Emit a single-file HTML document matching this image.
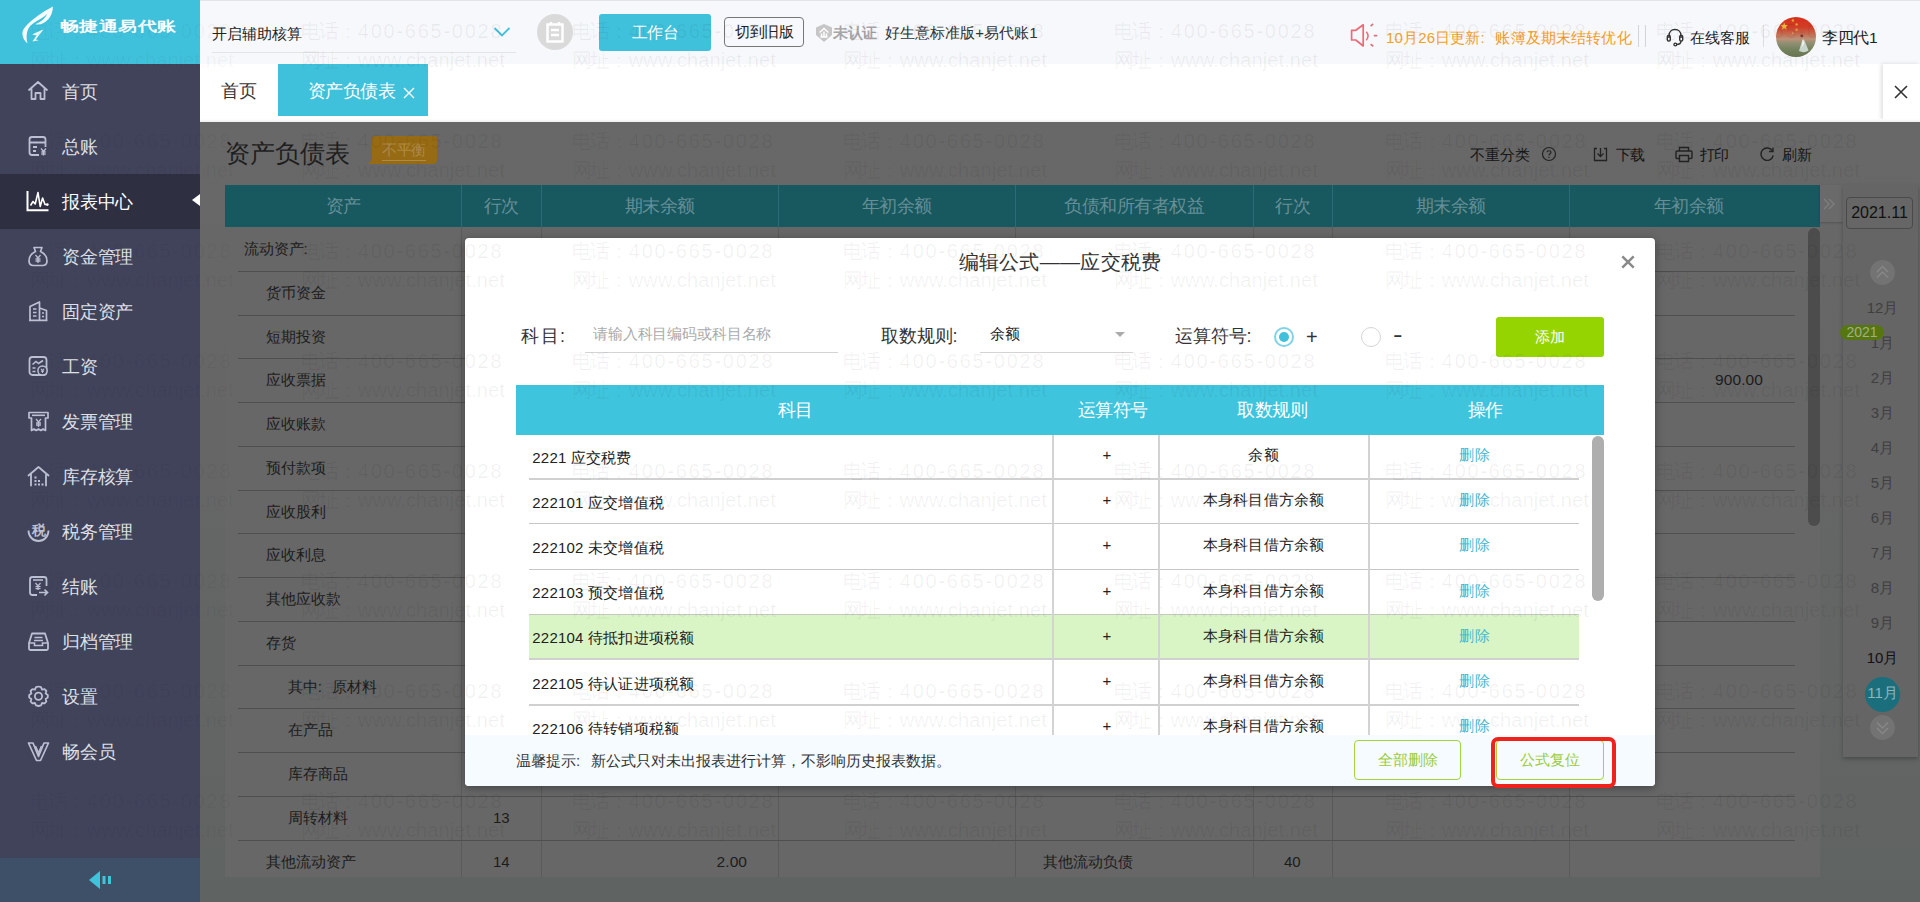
<!DOCTYPE html>
<html><head><meta charset="utf-8"><title>资产负债表</title>
<style>
*{box-sizing:border-box;margin:0;padding:0}
html,body{width:1920px;height:902px;overflow:hidden;background:#fff}
body{font-family:"Liberation Sans", sans-serif;position:relative;color:#333}
.abs{position:absolute}
.t{position:absolute;white-space:nowrap;line-height:1}
#side{position:absolute;left:0;top:0;width:200px;height:902px;background:#41435b}
#logo{position:absolute;left:0;top:0;width:200px;height:64px;background:#40c1db}
.mi{position:absolute;left:0;width:200px;height:55px}
.mi.act{background:#2e3042}
.mi span{position:absolute;left:62px;top:17px;font-size:18px;line-height:22px;color:#dfe0e6;white-space:nowrap;letter-spacing:-0.2px}
.mi.act span{color:#fff}
.mi svg{position:absolute;left:26px;top:15px}
#sbot{position:absolute;left:0;top:858px;width:200px;height:44px;background:#3e5068}
#top{position:absolute;left:200px;top:0;width:1720px;height:64px;background:#f7f8fb;border-top:1px solid #e3e4ea}
#tabs{position:absolute;left:200px;top:64px;width:1720px;height:58px;background:#fff}
#content{position:absolute;left:200px;top:122px;width:1720px;height:780px;background:linear-gradient(#686868 0%,#666666 35%,#626564 75%,#5f6362 100%)}
.hd{position:absolute;top:185px;height:42px;background:#18585f;color:#668f97;font-size:18px;line-height:42px;text-align:center;letter-spacing:-0.5px}
.rl{position:absolute;height:1px;background:#4f4f4f}
.vl{position:absolute;width:1px;background:#5a5a5a}
.rt{position:absolute;font-size:15px;line-height:16px;color:#1c1c1c;white-space:nowrap;letter-spacing:-0.1px}
#modal{position:absolute;left:465px;top:238px;width:1190px;height:548px;background:#fff;border-radius:4px;overflow:hidden;box-shadow:0 2px 8px rgba(0,0,0,.35)}
.mh{position:absolute;top:147px;height:50px;line-height:51px;color:#fff;font-size:18px;text-align:center;letter-spacing:-0.5px}
.mr{position:absolute;left:64px;width:1050px;height:45px;border-bottom:2px solid #d0d0d0}
.mr.thin{border-bottom:1px solid #c6c6c6;height:44.6px}
.mr.sel{background:#d9f5c6}
.mr span{position:absolute;top:11.4px;font-size:15px;line-height:18px;color:#222;white-space:nowrap}
.mr .c1{left:3.3px;top:14.1px;letter-spacing:0.2px}
.mr .c2{left:525px;width:106px;text-align:center}
.mr .c3{left:629.5px;width:210px;text-align:center;letter-spacing:0.25px}
.mr .c4{left:841.5px;width:209px;text-align:center;color:#41b7d3;letter-spacing:0.8px}
.mv{position:absolute;top:197px;width:2px;height:301px;background:#d3d3d3}
.btn{position:absolute;height:40px;border:1px solid #a3d43c;border-radius:4px;background:transparent;color:#9bcb3c;font-size:15px;line-height:38px;text-align:center;letter-spacing:0}
.wm{position:absolute;font-size:20px;line-height:29px;color:rgba(0,0,0,0.06);white-space:nowrap;letter-spacing:1.75px;pointer-events:none}
.wm i{font-style:normal;letter-spacing:0.1px}
.wm b{font-weight:normal;letter-spacing:-1.6px;margin-right:1.6px}
.wm.s{color:rgba(0,0,0,0.04)}
.mon{position:absolute;left:1845px;width:75px;text-align:center;font-size:15px;line-height:18px;color:#3f3f3f}
</style></head><body>

<div id="side">
<div id="logo">
<svg class="abs" style="left:0;top:0" width="60" height="50" viewBox="0 0 60 50"><path d="M52.9 6.4 C46 10 38 15 33 19.5 C26 25 22 30 22.4 34 C22.6 37.5 24.5 41 27.6 43.5 C26.5 40 26.2 36 27.2 32 C28.2 27.5 31 24.2 36 21.5 C40 19.3 44 17 47.5 13.5 C45 18.5 41 22 35.5 24.3 C40 25.3 45 23.3 48.5 19 C51.5 15.3 52.8 11 52.9 6.4 Z" fill="#fff" opacity=".95"/><path d="M43.6 29.3 L32 34.6 L36.6 35.5 L32.4 41.6 L38.8 40.2 L35.8 39.6 Z" fill="#fff" opacity=".9"/></svg>
<div class="t" style="left:59.5px;top:17px;font-size:19px;font-weight:bold;color:#fff;letter-spacing:0.6px;transform:scaleY(0.74);transform-origin:50% 50%">畅捷通易代账</div>
</div>
<div class="mi" style="top:64px"><svg width="25" height="25" viewBox="0 0 25 25"><path d="M3 11 L12 3 L21 11 M5.5 9.5 V20 H9.5 V14 H14.5 V20 H18.5 V9.5" fill="none" stroke="#bcc0d3" stroke-width="1.8" stroke-linejoin="round" stroke-linecap="round"/></svg><span>首页</span></div>
<div class="mi" style="top:119px"><svg width="25" height="25" viewBox="0 0 25 25"><rect x="3.5" y="3" width="16" height="18" rx="2.5" fill="none" stroke="#bcc0d3" stroke-width="1.8"/><path d="M3.5 8.5 H19.5 M7 13 H11 M7 17 H10" stroke="#bcc0d3" stroke-width="1.8"/><rect x="13" y="13" width="9" height="9" fill="#41435b"/><path d="M15 14.5 L17.5 17.5 L20 14.5 M17.5 17.5 V21.5 M15.3 18 H19.7 M15.3 20 H19.7" stroke="#bcc0d3" stroke-width="1.3" fill="none"/></svg><span>总账</span></div>
<div class="mi act" style="top:174px"><svg width="25" height="25" viewBox="0 0 25 25"><path d="M1.5 2 V21.3 H22.5" fill="none" stroke="#fff" stroke-width="2"/><path d="M4.5 16.5 L7 12.5 L9.2 15 L12 3.5 L14.2 17.5 L16.6 9 L19 15.5 H20.5" fill="none" stroke="#fff" stroke-width="1.6" stroke-linejoin="round"/><circle cx="21.3" cy="15.6" r="1.4" fill="#fff"/></svg><span>报表中心</span></div>
<div class="mi" style="top:229px"><svg width="25" height="25" viewBox="0 0 25 25"><path d="M8 3.5 H16 L14.5 7.5 C19 9.5 21 13.5 21 17 C21 20 19 21.5 16.5 21.5 H7.5 C5 21.5 3 20 3 17 C3 13.5 5 9.5 9.5 7.5 Z" fill="none" stroke="#bcc0d3" stroke-width="1.7" stroke-linejoin="round"/><path d="M9.5 11 L12 14 L14.5 11 M12 14 V19 M9.5 15 H14.5 M9.5 17 H14.5" stroke="#bcc0d3" stroke-width="1.3" fill="none"/></svg><span>资金管理</span></div>
<div class="mi" style="top:284px"><svg width="25" height="25" viewBox="0 0 25 25"><path d="M4 21 V7.5 L13.5 3 V21 M13.5 9 L20.5 11.5 V21 M3 21.3 H21.5" fill="none" stroke="#bcc0d3" stroke-width="1.7" stroke-linejoin="round"/><path d="M7 10 H10.5 M7 13.5 H10.5 M7 17 H10.5 M16 14 H18 M16 17.5 H18" stroke="#bcc0d3" stroke-width="1.5"/></svg><span>固定资产</span></div>
<div class="mi" style="top:339px"><svg width="25" height="25" viewBox="0 0 25 25"><rect x="3.5" y="3" width="17" height="18" rx="3" fill="none" stroke="#bcc0d3" stroke-width="1.8"/><path d="M6.5 10.5 L10 7.5 L12.5 9.5 L17 6.5 M6.5 14 H9.5 M6.5 17.5 H9.5" stroke="#bcc0d3" stroke-width="1.6" fill="none"/><circle cx="16.5" cy="16.5" r="4.6" fill="#41435b" stroke="#bcc0d3" stroke-width="1.5"/><path d="M15 14.8 L16.5 16.6 L18 14.8 M16.5 16.6 V19 M15 17.3 H18" stroke="#bcc0d3" stroke-width="1.1" fill="none"/></svg><span>工资</span></div>
<div class="mi" style="top:394px"><svg width="25" height="25" viewBox="0 0 25 25"><path d="M3 3.5 H22 V9 H19.5 V21.5 L17 20 L14.8 21.5 L12.5 20 L10.2 21.5 L8 20 L5.5 21.5 V9 H3 Z" fill="none" stroke="#bcc0d3" stroke-width="1.7" stroke-linejoin="round"/><path d="M6 6.3 H19" stroke="#bcc0d3" stroke-width="1.6"/><path d="M10 10 L12.5 13 L15 10 M12.5 13 V18 M10 14 H15 M10 16 H15" stroke="#bcc0d3" stroke-width="1.3" fill="none"/></svg><span>发票管理</span></div>
<div class="mi" style="top:449px"><svg width="25" height="25" viewBox="0 0 25 25"><path d="M2.5 11.5 L12.5 3 L22.5 11.5 M5 10 V21.5 M20 10 V21.5" fill="none" stroke="#bcc0d3" stroke-width="1.8" stroke-linejoin="round" stroke-linecap="round"/><path d="M8.5 20.5 H10.5 M12 20.5 H14 M15.5 20.5 H17.5 M8.5 17 H10.5 M12 17 H14 M8.5 13.5 H10.5" stroke="#bcc0d3" stroke-width="2"/></svg><span>库存核算</span></div>
<div class="mi" style="top:504px"><svg width="25" height="25" viewBox="0 0 25 25"><path d="M2.5 11.5 C2.5 17.5 7 22 12.5 22 C18 22 22.5 17.5 22.5 11.5" fill="none" stroke="#bcc0d3" stroke-width="1.8"/><text x="12.5" y="15.5" font-size="13.5" font-weight="bold" text-anchor="middle" fill="#bcc0d3" font-family="Liberation Sans, sans-serif">税</text></svg><span>税务管理</span></div>
<div class="mi" style="top:559px"><svg width="25" height="25" viewBox="0 0 25 25"><path d="M20.5 12 V5.5 C20.5 4 19.5 3 18 3 H6.5 C5 3 4 4 4 5.5 V18.5 C4 20 5 21 6.5 21 H11" fill="none" stroke="#bcc0d3" stroke-width="1.8"/><path d="M7 6 H17" stroke="#bcc0d3" stroke-width="1.6"/><path d="M9.5 9 L12 12 L14.5 9 M12 12 V16 M9.5 12.7 H14.5 M9.5 14.7 H14.5" stroke="#bcc0d3" stroke-width="1.2" fill="none"/><path d="M13 18.5 H21.5 M18.5 15.5 L21.5 18.5 L18.5 21.5" stroke="#bcc0d3" stroke-width="1.7" fill="none"/></svg><span>结账</span></div>
<div class="mi" style="top:614px"><svg width="25" height="25" viewBox="0 0 25 25"><path d="M3 14 L6 4.5 H19 L22 14 V19.5 C22 20.5 21.3 21 20.5 21 H4.5 C3.7 21 3 20.5 3 19.5 Z" fill="none" stroke="#bcc0d3" stroke-width="1.8" stroke-linejoin="round"/><path d="M3 14 H8.5 V16.5 H16.5 V14 H22 M8.5 8.5 H16.5 M8 11.5 H17" fill="none" stroke="#bcc0d3" stroke-width="1.6"/></svg><span>归档管理</span></div>
<div class="mi" style="top:669px"><svg width="25" height="25" viewBox="0 0 25 25"><path d="M12.5 2.5 L15 3.2 L16 5.6 L18.6 5.2 L20.4 7 L19.6 9.5 L21.8 11 V13.6 L19.6 15 L20.4 17.5 L18.6 19.4 L16 19 L15 21.4 L12.5 22 L10 21.4 L9 19 L6.4 19.4 L4.6 17.5 L5.4 15 L3.2 13.6 V11 L5.4 9.5 L4.6 7 L6.4 5.2 L9 5.6 L10 3.2 Z" fill="none" stroke="#bcc0d3" stroke-width="1.8" stroke-linejoin="round"/><circle cx="12.5" cy="12.3" r="3.6" fill="none" stroke="#bcc0d3" stroke-width="1.8"/></svg><span>设置</span></div>
<div class="mi" style="top:724px"><svg width="25" height="25" viewBox="0 0 25 25"><path d="M2.5 4 H7 L12.5 17.5 L18 4 H22.5 L14.5 21.5 H10.5 Z" fill="none" stroke="#bcc0d3" stroke-width="1.7" stroke-linejoin="round"/><path d="M9.5 7 L12.5 14 L15.5 7" fill="none" stroke="#bcc0d3" stroke-width="1.5"/></svg><span>畅会员</span></div>
<div class="abs" style="left:192px;top:194px;width:0;height:0;border-top:6px solid transparent;border-bottom:6px solid transparent;border-right:8px solid #fff"></div>
<div id="sbot"><svg class="abs" style="left:88px;top:13px" width="26" height="18" viewBox="0 0 26 18"><path d="M12 0 V18 L1 9 Z" fill="#3fc4de"/><rect x="14.5" y="5" width="3" height="8" fill="#3fc4de"/><rect x="20" y="5" width="3" height="8" fill="#3fc4de"/></svg></div>
</div>
<div id="top">
<div class="t" style="left:12px;top:25px;font-size:15px;color:#222;letter-spacing:0">开启辅助核算</div>
<div class="abs" style="left:12px;top:51px;width:304px;height:1px;background:#e4e4e4"></div>
<svg class="abs" style="left:293px;top:25px" width="18" height="12" viewBox="0 0 18 12"><path d="M1.5 2 L9 9.5 L16.5 2" fill="none" stroke="#3fc1db" stroke-width="1.8"/></svg>
<div class="abs" style="left:337px;top:13px;width:36px;height:36px;border-radius:18px;background:#dadada"></div>
<svg class="abs" style="left:345px;top:19px" width="20" height="24" viewBox="0 0 20 24"><path d="M2.5 4.5 H17.5 V21.5 H2.5 Z M6 2 V5 M14 2 V5 M6 10 H14 M6 15 H14" fill="none" stroke="#fff" stroke-width="2.4"/></svg>
<div class="abs" style="left:399px;top:13px;width:112px;height:37px;background:#3fc1db;border-radius:3px;color:#fff;font-size:16px;line-height:37px;text-align:center;letter-spacing:-0.5px">工作台</div>
<div class="abs" style="left:524px;top:16px;width:80px;height:30px;border:1px solid #777;border-radius:4px;color:#222;font-size:15px;line-height:28px;text-align:center;letter-spacing:-0.5px">切到旧版</div>
<svg class="abs" style="left:615px;top:22px" width="18" height="20" viewBox="0 0 18 20"><path d="M9 1 L17 4.5 V12 L9 19 L1 12 V4.5 Z" fill="#c6c6c6"/><path d="M4.5 9.5 L9 5.5 L13.5 9.5 M9 8.5 V14 M5.5 14 H12.5 M6.5 10.5 V14 M11.5 10.5 V14" stroke="#fff" stroke-width="1.5" fill="none"/></svg>
<div class="t" style="left:633px;top:24px;font-size:15px;color:#a6a6a6;font-weight:bold;letter-spacing:-0.4px">未认证</div>
<div class="t" style="left:685px;top:24px;font-size:15px;color:#333;letter-spacing:0.05px">好生意标准版+易代账1</div>
<svg class="abs" style="left:1150px;top:21px" width="30" height="30" viewBox="0 0 30 30"><path d="M1.6 8.3 H5.8 L13.2 2.8 V24 L5.8 18 H1.6 Z" fill="none" stroke="#ec6a77" stroke-width="1.7" stroke-linejoin="round"/><path d="M16.3 9.8 Q19.8 14 16.3 18.2" fill="none" stroke="#ec6a77" stroke-width="1.5"/><path d="M21.2 3.6 L22.6 2.4 M24.5 13.6 H26.5 M21.2 22.6 L22.6 23.8" stroke="#d9707a" stroke-width="1.8" stroke-linecap="round"/></svg>
<div class="t" style="left:1186px;top:29px;font-size:15px;color:#f5a024;letter-spacing:0.15px">10月26日更新:<span style="margin-left:10.5px"></span><span style="color:#f59a23">账簿及期末结转优化</span></div>
<div class="abs" style="left:1438px;top:24px;width:1px;height:22px;background:#d2d4da"></div>
<div class="abs" style="left:1445px;top:24px;width:1px;height:22px;background:#d2d4da"></div>
<svg class="abs" style="left:1465px;top:25.5px" width="20" height="20" viewBox="0 0 20 20"><path d="M4 11 V8.5 C4 5 6.5 2.5 10 2.5 C13.5 2.5 16 5 16 8.5 V11" fill="none" stroke="#333" stroke-width="1.5"/><rect x="2.3" y="8.5" width="3" height="5.5" rx="1.3" fill="none" stroke="#333" stroke-width="1.4"/><rect x="14.7" y="8.5" width="3" height="5.5" rx="1.3" fill="none" stroke="#333" stroke-width="1.4"/><path d="M16 14 C16 16.5 14 17.5 11.5 17.5" fill="none" stroke="#333" stroke-width="1.4"/><circle cx="10.3" cy="17.5" r="1.4" fill="none" stroke="#333" stroke-width="1.3"/></svg>
<div class="t" style="left:1490px;top:28.5px;font-size:15px;color:#222;letter-spacing:0.1px">在线客服</div>
<div class="abs" style="left:1563px;top:24px;width:1px;height:22px;background:#dcdee3"></div>
<svg class="abs" style="left:1576px;top:16px" width="40" height="40" viewBox="0 0 40 40"><defs><linearGradient id="av" x1="0" y1="0" x2="0" y2="1"><stop offset="0" stop-color="#d92e1c"/><stop offset="0.25" stop-color="#d13d26"/><stop offset="0.42" stop-color="#c4694e"/><stop offset="0.55" stop-color="#bd9279"/><stop offset="0.66" stop-color="#8e8f72"/><stop offset="0.8" stop-color="#76835f"/><stop offset="1" stop-color="#667452"/></linearGradient><clipPath id="avc"><circle cx="20" cy="20" r="20"/></clipPath></defs><g clip-path="url(#avc)"><rect width="40" height="40" fill="url(#av)"/><path d="M8.2 5.4 L9.2 8.1 L12 8.2 L9.8 9.9 L10.6 12.7 L8.2 11.1 L5.8 12.7 L6.6 9.9 L4.4 8.2 L7.2 8.1 Z" fill="#e6b63a"/><circle cx="16.9" cy="3.5" r="1.2" fill="#e2a53a"/><circle cx="20.6" cy="7.4" r="1.2" fill="#e2a53a"/><circle cx="20.6" cy="12.8" r="1.2" fill="#dc9a45"/><circle cx="16.9" cy="16.2" r="1" fill="#d59058"/><path d="M26.5 22.5 L28 22.5 L32.6 33.5 Q28 36.5 23 34 Z" fill="#cfdcd4" opacity=".92"/><path d="M26.8 22.5 L28.3 26 L25.5 31 Z" fill="#f2f4f0"/><circle cx="25.8" cy="18.8" r="1.5" fill="#7a3a30"/></g></svg>
<div class="t" style="left:1622px;top:29px;font-size:15.5px;color:#222;letter-spacing:-0.3px">李四代1</div>
</div>
<div id="tabs">
<div class="t" style="left:21px;top:18px;font-size:18px;color:#333;letter-spacing:-0.5px">首页</div>
<div class="abs" style="left:78px;top:0;width:150px;height:52px;background:#3fc1db"></div>
<div class="t" style="left:108px;top:18px;font-size:18px;color:#fff;letter-spacing:-0.6px">资产负债表</div>
<svg class="abs" style="left:203px;top:23px" width="12" height="12" viewBox="0 0 12 12"><path d="M1 1 L11 11 M11 1 L1 11" stroke="#fff" stroke-width="1.4"/></svg>
<div class="abs" style="left:1683px;top:0;width:37px;height:56px;background:#fff;box-shadow:-2px 0 4px rgba(0,0,0,.12)"></div>
<svg class="abs" style="left:1693px;top:20px" width="16" height="16" viewBox="0 0 16 16"><path d="M2 2 L14 14 M14 2 L2 14" stroke="#333" stroke-width="1.6"/></svg>
<div class="abs" style="left:0;top:55px;width:1720px;height:3px;background:linear-gradient(#fff,#eee)"></div>
</div>
<div id="content"></div>
<div class="t" style="left:225px;top:141px;font-size:25px;color:#1e1e1e;letter-spacing:0">资产负债表</div>
<svg class="abs" style="left:367px;top:136px" width="72" height="29" viewBox="0 0 72 29"><path d="M8 0 H67 Q70 0 70 3 V24 Q70 28 66 28 H1 Q5 25 5 20 V3 Q5 0 8 0 Z" fill="#976b13"/></svg>
<div class="t" style="left:382px;top:142px;font-size:15px;color:#ad8a48;letter-spacing:-0.4px;border-bottom:1px solid #ad8a48;padding-bottom:3px">不平衡</div>
<div class="t" style="left:1470px;top:147px;font-size:15px;color:#151515;letter-spacing:-0.15px">不重分类</div>
<svg class="abs" style="left:1541px;top:146px" width="16" height="16" viewBox="0 0 16 16"><circle cx="8" cy="8" r="6.5" fill="none" stroke="#222" stroke-width="1.2"/><path d="M6 6.3 C6 4.2 10 4.2 10 6.3 C10 7.8 8 7.6 8 9.4 M8 10.8 V12" fill="none" stroke="#222" stroke-width="1.2"/></svg>
<svg class="abs" style="left:1593px;top:147px" width="15" height="15" viewBox="0 0 15 15"><path d="M4 1.5 H1.5 V13.5 H13.5 V1.5 H11 M7.5 1 V9.5 M4.5 6.5 L7.5 9.5 L10.5 6.5" fill="none" stroke="#222" stroke-width="1.3"/></svg>
<div class="t" style="left:1615.5px;top:147px;font-size:15px;color:#151515;letter-spacing:-0.1px">下载</div>
<svg class="abs" style="left:1675px;top:146px" width="18" height="17" viewBox="0 0 18 17"><path d="M4.5 5 V1.5 H13.5 V5 M4.5 12.5 H2 C1.5 12.5 1 12 1 11.5 V6 C1 5.5 1.5 5 2 5 H16 C16.5 5 17 5.5 17 6 V11.5 C17 12 16.5 12.5 16 12.5 H13.5 M4.5 9.5 H13.5 V15.5 H4.5 Z" fill="none" stroke="#222" stroke-width="1.4"/></svg>
<div class="t" style="left:1699.5px;top:147px;font-size:15px;color:#151515;letter-spacing:-0.1px">打印</div>
<svg class="abs" style="left:1759px;top:146px" width="16" height="16" viewBox="0 0 16 16"><path d="M13.5 5 A6.2 6.2 0 1 0 14.2 9.5" fill="none" stroke="#222" stroke-width="1.4"/><path d="M14 1.5 V5.5 H10" fill="none" stroke="#222" stroke-width="1.4"/></svg>
<div class="t" style="left:1782px;top:147px;font-size:15px;color:#151515;letter-spacing:-0.1px">刷新</div>
<div class="abs" style="left:225px;top:227px;width:1595px;height:650px;background:#676767"></div>
<div class="hd" style="left:225px;width:1595px"></div>
<div class="hd" style="left:225px;width:236px;background:none">资产</div>
<div class="hd" style="left:461px;width:80px;background:none">行次</div>
<div class="hd" style="left:541px;width:237px;background:none">期末余额</div>
<div class="hd" style="left:778px;width:237px;background:none">年初余额</div>
<div class="hd" style="left:1015px;width:238px;background:none">负债和所有者权益</div>
<div class="hd" style="left:1253px;width:79px;background:none">行次</div>
<div class="hd" style="left:1332px;width:237px;background:none">期末余额</div>
<div class="hd" style="left:1569px;width:239px;background:none">年初余额</div>
<div class="vl" style="left:461px;top:185px;height:42px;background:#2c6a76"></div>
<div class="vl" style="left:461px;top:227px;height:650px"></div>
<div class="vl" style="left:541px;top:185px;height:42px;background:#2c6a76"></div>
<div class="vl" style="left:541px;top:227px;height:650px"></div>
<div class="vl" style="left:778px;top:185px;height:42px;background:#2c6a76"></div>
<div class="vl" style="left:778px;top:227px;height:650px"></div>
<div class="vl" style="left:1015px;top:185px;height:42px;background:#2c6a76"></div>
<div class="vl" style="left:1015px;top:227px;height:650px"></div>
<div class="vl" style="left:1253px;top:185px;height:42px;background:#2c6a76"></div>
<div class="vl" style="left:1253px;top:227px;height:650px"></div>
<div class="vl" style="left:1332px;top:185px;height:42px;background:#2c6a76"></div>
<div class="vl" style="left:1332px;top:227px;height:650px"></div>
<div class="vl" style="left:1569px;top:185px;height:42px;background:#2c6a76"></div>
<div class="vl" style="left:1569px;top:227px;height:650px"></div>
<div class="rt" style="left:244px;top:241.0px">流动资产:</div>
<div class="rt" style="left:266px;top:284.8px">货币资金</div>
<div class="rl" style="left:238px;top:270.8px;width:1557px"></div>
<div class="rt" style="left:266px;top:328.5px">短期投资</div>
<div class="rl" style="left:238px;top:314.5px;width:1557px"></div>
<div class="rt" style="left:266px;top:372.2px">应收票据</div>
<div class="rl" style="left:238px;top:358.2px;width:1557px"></div>
<div class="rt" style="left:266px;top:416.0px">应收账款</div>
<div class="rl" style="left:238px;top:402.0px;width:1557px"></div>
<div class="rt" style="left:266px;top:459.8px">预付款项</div>
<div class="rl" style="left:238px;top:445.8px;width:1557px"></div>
<div class="rt" style="left:266px;top:503.5px">应收股利</div>
<div class="rl" style="left:238px;top:489.5px;width:1557px"></div>
<div class="rt" style="left:266px;top:547.2px">应收利息</div>
<div class="rl" style="left:238px;top:533.2px;width:1557px"></div>
<div class="rt" style="left:266px;top:591.0px">其他应收款</div>
<div class="rl" style="left:238px;top:577.0px;width:1557px"></div>
<div class="rt" style="left:266px;top:634.8px">存货</div>
<div class="rl" style="left:238px;top:620.8px;width:1557px"></div>
<div class="rt" style="left:288px;top:678.5px">其中:<span style="margin-left:10px"></span>原材料</div>
<div class="rl" style="left:238px;top:664.5px;width:1557px"></div>
<div class="rt" style="left:288px;top:722.2px">在产品</div>
<div class="rl" style="left:238px;top:708.2px;width:1557px"></div>
<div class="rt" style="left:288px;top:766.0px">库存商品</div>
<div class="rl" style="left:238px;top:752.0px;width:1557px"></div>
<div class="rt" style="left:288px;top:809.8px">周转材料</div>
<div class="rl" style="left:238px;top:795.8px;width:1557px"></div>
<div class="rt" style="left:266px;top:853.5px">其他流动资产</div>
<div class="rl" style="left:238px;top:839.5px;width:1557px"></div>
<div class="rt" style="left:493px;top:810px;font-size:15px">13</div>
<div class="rt" style="left:493px;top:854px;font-size:15px">14</div>
<div class="rt" style="left:716.5px;top:854px;font-size:15.5px;letter-spacing:0.1px">2.00</div>
<div class="rt" style="left:1043px;top:854px">其他流动负债</div>
<div class="rt" style="left:1284px;top:854px;font-size:15px">40</div>
<div class="rt" style="left:1715px;top:372px;font-size:15.5px;letter-spacing:0.1px">900.00</div>
<div class="abs" style="left:1808px;top:228px;width:12px;height:298px;background:#4c4c4c;border-radius:6px"></div>
<div class="abs" style="left:1820px;top:185px;width:23px;height:37px;background:#6a6a6a;box-shadow:0 1px 2px rgba(0,0,0,.2)"></div>
<svg class="abs" style="left:1822px;top:197px" width="14" height="14" viewBox="0 0 14 14"><path d="M2 2 L7 7 L2 12 M7 2 L12 7 L7 12" fill="none" stroke="#7f7f7f" stroke-width="1.3"/></svg>
<div class="abs" style="left:1843px;top:185px;width:75px;height:572px;background:#656565;box-shadow:0 2px 4px rgba(0,0,0,.25)"></div>
<div class="abs" style="left:1846px;top:197px;width:67px;height:32px;border:1px solid #4a4a4a;border-radius:4px;background:#666;font-size:16px;line-height:30px;text-align:center;color:#111">2021.11</div>
<div class="abs" style="left:1870px;top:260px;width:25px;height:25px;border-radius:13px;background:#737373"></div>
<svg class="abs" style="left:1875px;top:264px" width="15" height="16" viewBox="0 0 15 16"><path d="M2 8 L7.5 2.5 L13 8 M2 13.5 L7.5 8 L13 13.5" fill="none" stroke="#878787" stroke-width="1.5"/></svg>
<div class="mon" style="top:298.5px;color:#3f3f3f">12月</div>
<div class="mon" style="top:333.5px;color:#3f3f3f">1月</div>
<div class="mon" style="top:368.5px;color:#3f3f3f">2月</div>
<div class="mon" style="top:403.5px;color:#3f3f3f">3月</div>
<div class="mon" style="top:438.5px;color:#3f3f3f">4月</div>
<div class="mon" style="top:473.5px;color:#3f3f3f">5月</div>
<div class="mon" style="top:508.5px;color:#3f3f3f">6月</div>
<div class="mon" style="top:543.5px;color:#3f3f3f">7月</div>
<div class="mon" style="top:578.5px;color:#3f3f3f">8月</div>
<div class="mon" style="top:613.5px;color:#3f3f3f">9月</div>
<div class="mon" style="top:648.5px;color:#111">10月</div>
<div class="abs" style="left:1865px;top:676.5px;width:35px;height:35px;border-radius:18px;background:#1b6f7c"></div>
<div class="mon" style="top:683.5px;color:#8fb4ba">11月</div>
<div class="abs" style="left:1840px;top:325px;width:44px;height:15px;border-radius:8px;background:#567710;color:#a0af86;font-size:14px;line-height:15px;text-align:center">2021</div>
<div class="abs" style="left:1870px;top:715px;width:25px;height:25px;border-radius:13px;background:#737373"></div>
<svg class="abs" style="left:1875px;top:720px" width="15" height="16" viewBox="0 0 15 16"><path d="M2 2.5 L7.5 8 L13 2.5 M2 8 L7.5 13.5 L13 8" fill="none" stroke="#878787" stroke-width="1.5"/></svg>
<div id="modal">
<div class="t" style="left:0;width:1190px;text-align:center;top:14px;font-size:20px;color:#333;letter-spacing:0.3px">编辑公式——应交税费</div>
<svg class="abs" style="left:1156px;top:17px" width="14" height="14" viewBox="0 0 14 14"><path d="M1.3 1.3 L12.7 12.7 M12.7 1.3 L1.3 12.7" stroke="#8a8a8a" stroke-width="2.5"/></svg>
<div class="t" style="left:56px;top:89px;font-size:18px;color:#333;letter-spacing:1.5px">科目:</div>
<div class="t" style="left:128px;top:89px;font-size:14.5px;color:#aaa;letter-spacing:-0.15px">请输入科目编码或科目名称</div>
<div class="abs" style="left:120px;top:114px;width:253px;height:1px;background:#d4d4d4"></div>
<div class="t" style="left:416px;top:89px;font-size:18px;color:#333;letter-spacing:-0.1px">取数规则:</div>
<div class="t" style="left:525px;top:89px;font-size:14.5px;color:#222;letter-spacing:-0.4px">余额</div>
<div class="abs" style="left:515px;top:114px;width:153px;height:1px;background:#d4d4d4"></div>
<div class="abs" style="left:650px;top:94px;width:0;height:0;border-left:5px solid transparent;border-right:5px solid transparent;border-top:5px solid #aaa"></div>
<div class="t" style="left:710px;top:89px;font-size:18px;color:#333;letter-spacing:-0.1px">运算符号:</div>
<div class="abs" style="left:809px;top:89px;width:20px;height:20px;border-radius:10px;border:2px solid #7ed3e6;background:#fff"></div><div class="abs" style="left:814px;top:94px;width:10px;height:10px;border-radius:5px;background:#3fc1db"></div>
<div class="t" style="left:841px;top:88.5px;font-size:20px;color:#333">+</div>
<div class="abs" style="left:896px;top:89px;width:20px;height:20px;border-radius:10px;border:1.5px solid #d5d5d5;background:#fff"></div>
<div class="t" style="left:927.5px;top:86px;font-size:22px;color:#333;transform:scaleX(1.3);transform-origin:left">-</div>
<div class="abs" style="left:1031px;top:79px;width:108px;height:40px;background:#96d400;border-radius:3px;color:#fff;font-size:15px;line-height:40px;text-align:center;letter-spacing:-0.4px">添加</div>
<div class="abs" style="left:51px;top:147px;width:1088px;height:50px;background:#3fc4dd"></div>
<div class="mh" style="left:68px;width:524px">科目</div>
<div class="mh" style="left:590px;width:115px">运算符号</div>
<div class="mh" style="left:694px;width:226px">取数规则</div>
<div class="mh" style="left:904px;width:232px">操作</div>
<div class="mr" style="top:196.6px"><span class="c1">2221 应交税费</span><span class="c2">+</span><span class="c3">余额</span><span class="c4">删除</span></div>
<div class="mr thin" style="top:241.8px"><span class="c1">222101 应交增值税</span><span class="c2">+</span><span class="c3">本身科目借方余额</span><span class="c4">删除</span></div>
<div class="mr thin" style="top:287.0px"><span class="c1">222102 未交增值税</span><span class="c2">+</span><span class="c3">本身科目借方余额</span><span class="c4">删除</span></div>
<div class="mr thin" style="top:332.2px"><span class="c1">222103 预交增值税</span><span class="c2">+</span><span class="c3">本身科目借方余额</span><span class="c4">删除</span></div>
<div class="mr sel" style="top:377.4px"><span class="c1">222104 待抵扣进项税额</span><span class="c2">+</span><span class="c3">本身科目借方余额</span><span class="c4">删除</span></div>
<div class="mr" style="top:422.6px"><span class="c1">222105 待认证进项税额</span><span class="c2">+</span><span class="c3">本身科目借方余额</span><span class="c4">删除</span></div>
<div class="mr" style="top:467.8px"><span class="c1">222106 待转销项税额</span><span class="c2">+</span><span class="c3">本身科目借方余额</span><span class="c4">删除</span></div>
<div class="mv" style="left:587px"></div>
<div class="mv" style="left:693px"></div>
<div class="mv" style="left:903px"></div>
<div class="abs" style="left:1127px;top:198px;width:12px;height:165px;background:#aeaeae;border-radius:6px"></div>
<div class="abs" style="left:0;top:497px;width:1190px;height:51px;background:#f5fbff"></div>
<div class="t" style="left:51px;top:515px;font-size:15px;color:#333;letter-spacing:0.02px">温馨提示:<span style="margin-left:10.5px"></span>新公式只对未出报表进行计算，不影响历史报表数据。</div>
<div class="btn" style="left:889px;top:502px;width:107px">全部删除</div>
<div class="btn" style="left:1031px;top:502px;width:108px">公式复位</div>
</div>
<div class="abs" style="left:1491px;top:737px;width:125px;height:51px;border:4px solid #f0231c;border-radius:7px"></div>
<div class="wm s" style="left:30px;top:17px"><b>电话：</b>400-665-0028<br><b>网址：</b><i>www.chanjet.net</i></div>
<div class="wm" style="left:301px;top:17px"><b>电话：</b>400-665-0028<br><b>网址：</b><i>www.chanjet.net</i></div>
<div class="wm" style="left:572px;top:17px"><b>电话：</b>400-665-0028<br><b>网址：</b><i>www.chanjet.net</i></div>
<div class="wm" style="left:843px;top:17px"><b>电话：</b>400-665-0028<br><b>网址：</b><i>www.chanjet.net</i></div>
<div class="wm" style="left:1114px;top:17px"><b>电话：</b>400-665-0028<br><b>网址：</b><i>www.chanjet.net</i></div>
<div class="wm" style="left:1385px;top:17px"><b>电话：</b>400-665-0028<br><b>网址：</b><i>www.chanjet.net</i></div>
<div class="wm" style="left:1656px;top:17px"><b>电话：</b>400-665-0028<br><b>网址：</b><i>www.chanjet.net</i></div>
<div class="wm s" style="left:30px;top:127px"><b>电话：</b>400-665-0028<br><b>网址：</b><i>www.chanjet.net</i></div>
<div class="wm" style="left:301px;top:127px"><b>电话：</b>400-665-0028<br><b>网址：</b><i>www.chanjet.net</i></div>
<div class="wm" style="left:572px;top:127px"><b>电话：</b>400-665-0028<br><b>网址：</b><i>www.chanjet.net</i></div>
<div class="wm" style="left:843px;top:127px"><b>电话：</b>400-665-0028<br><b>网址：</b><i>www.chanjet.net</i></div>
<div class="wm" style="left:1114px;top:127px"><b>电话：</b>400-665-0028<br><b>网址：</b><i>www.chanjet.net</i></div>
<div class="wm" style="left:1385px;top:127px"><b>电话：</b>400-665-0028<br><b>网址：</b><i>www.chanjet.net</i></div>
<div class="wm" style="left:1656px;top:127px"><b>电话：</b>400-665-0028<br><b>网址：</b><i>www.chanjet.net</i></div>
<div class="wm s" style="left:30px;top:237px"><b>电话：</b>400-665-0028<br><b>网址：</b><i>www.chanjet.net</i></div>
<div class="wm" style="left:301px;top:237px"><b>电话：</b>400-665-0028<br><b>网址：</b><i>www.chanjet.net</i></div>
<div class="wm" style="left:572px;top:237px"><b>电话：</b>400-665-0028<br><b>网址：</b><i>www.chanjet.net</i></div>
<div class="wm" style="left:843px;top:237px"><b>电话：</b>400-665-0028<br><b>网址：</b><i>www.chanjet.net</i></div>
<div class="wm" style="left:1114px;top:237px"><b>电话：</b>400-665-0028<br><b>网址：</b><i>www.chanjet.net</i></div>
<div class="wm" style="left:1385px;top:237px"><b>电话：</b>400-665-0028<br><b>网址：</b><i>www.chanjet.net</i></div>
<div class="wm" style="left:1656px;top:237px"><b>电话：</b>400-665-0028<br><b>网址：</b><i>www.chanjet.net</i></div>
<div class="wm s" style="left:30px;top:347px"><b>电话：</b>400-665-0028<br><b>网址：</b><i>www.chanjet.net</i></div>
<div class="wm" style="left:301px;top:347px"><b>电话：</b>400-665-0028<br><b>网址：</b><i>www.chanjet.net</i></div>
<div class="wm" style="left:572px;top:347px"><b>电话：</b>400-665-0028<br><b>网址：</b><i>www.chanjet.net</i></div>
<div class="wm" style="left:843px;top:347px"><b>电话：</b>400-665-0028<br><b>网址：</b><i>www.chanjet.net</i></div>
<div class="wm" style="left:1114px;top:347px"><b>电话：</b>400-665-0028<br><b>网址：</b><i>www.chanjet.net</i></div>
<div class="wm" style="left:1385px;top:347px"><b>电话：</b>400-665-0028<br><b>网址：</b><i>www.chanjet.net</i></div>
<div class="wm" style="left:1656px;top:347px"><b>电话：</b>400-665-0028<br><b>网址：</b><i>www.chanjet.net</i></div>
<div class="wm s" style="left:30px;top:457px"><b>电话：</b>400-665-0028<br><b>网址：</b><i>www.chanjet.net</i></div>
<div class="wm" style="left:301px;top:457px"><b>电话：</b>400-665-0028<br><b>网址：</b><i>www.chanjet.net</i></div>
<div class="wm" style="left:572px;top:457px"><b>电话：</b>400-665-0028<br><b>网址：</b><i>www.chanjet.net</i></div>
<div class="wm" style="left:843px;top:457px"><b>电话：</b>400-665-0028<br><b>网址：</b><i>www.chanjet.net</i></div>
<div class="wm" style="left:1114px;top:457px"><b>电话：</b>400-665-0028<br><b>网址：</b><i>www.chanjet.net</i></div>
<div class="wm" style="left:1385px;top:457px"><b>电话：</b>400-665-0028<br><b>网址：</b><i>www.chanjet.net</i></div>
<div class="wm" style="left:1656px;top:457px"><b>电话：</b>400-665-0028<br><b>网址：</b><i>www.chanjet.net</i></div>
<div class="wm s" style="left:30px;top:567px"><b>电话：</b>400-665-0028<br><b>网址：</b><i>www.chanjet.net</i></div>
<div class="wm" style="left:301px;top:567px"><b>电话：</b>400-665-0028<br><b>网址：</b><i>www.chanjet.net</i></div>
<div class="wm" style="left:572px;top:567px"><b>电话：</b>400-665-0028<br><b>网址：</b><i>www.chanjet.net</i></div>
<div class="wm" style="left:843px;top:567px"><b>电话：</b>400-665-0028<br><b>网址：</b><i>www.chanjet.net</i></div>
<div class="wm" style="left:1114px;top:567px"><b>电话：</b>400-665-0028<br><b>网址：</b><i>www.chanjet.net</i></div>
<div class="wm" style="left:1385px;top:567px"><b>电话：</b>400-665-0028<br><b>网址：</b><i>www.chanjet.net</i></div>
<div class="wm" style="left:1656px;top:567px"><b>电话：</b>400-665-0028<br><b>网址：</b><i>www.chanjet.net</i></div>
<div class="wm s" style="left:30px;top:677px"><b>电话：</b>400-665-0028<br><b>网址：</b><i>www.chanjet.net</i></div>
<div class="wm" style="left:301px;top:677px"><b>电话：</b>400-665-0028<br><b>网址：</b><i>www.chanjet.net</i></div>
<div class="wm" style="left:572px;top:677px"><b>电话：</b>400-665-0028<br><b>网址：</b><i>www.chanjet.net</i></div>
<div class="wm" style="left:843px;top:677px"><b>电话：</b>400-665-0028<br><b>网址：</b><i>www.chanjet.net</i></div>
<div class="wm" style="left:1114px;top:677px"><b>电话：</b>400-665-0028<br><b>网址：</b><i>www.chanjet.net</i></div>
<div class="wm" style="left:1385px;top:677px"><b>电话：</b>400-665-0028<br><b>网址：</b><i>www.chanjet.net</i></div>
<div class="wm" style="left:1656px;top:677px"><b>电话：</b>400-665-0028<br><b>网址：</b><i>www.chanjet.net</i></div>
<div class="wm s" style="left:30px;top:787px"><b>电话：</b>400-665-0028<br><b>网址：</b><i>www.chanjet.net</i></div>
<div class="wm" style="left:301px;top:787px"><b>电话：</b>400-665-0028<br><b>网址：</b><i>www.chanjet.net</i></div>
<div class="wm" style="left:572px;top:787px"><b>电话：</b>400-665-0028<br><b>网址：</b><i>www.chanjet.net</i></div>
<div class="wm" style="left:843px;top:787px"><b>电话：</b>400-665-0028<br><b>网址：</b><i>www.chanjet.net</i></div>
<div class="wm" style="left:1114px;top:787px"><b>电话：</b>400-665-0028<br><b>网址：</b><i>www.chanjet.net</i></div>
<div class="wm" style="left:1385px;top:787px"><b>电话：</b>400-665-0028<br><b>网址：</b><i>www.chanjet.net</i></div>
<div class="wm" style="left:1656px;top:787px"><b>电话：</b>400-665-0028<br><b>网址：</b><i>www.chanjet.net</i></div>
</body></html>
